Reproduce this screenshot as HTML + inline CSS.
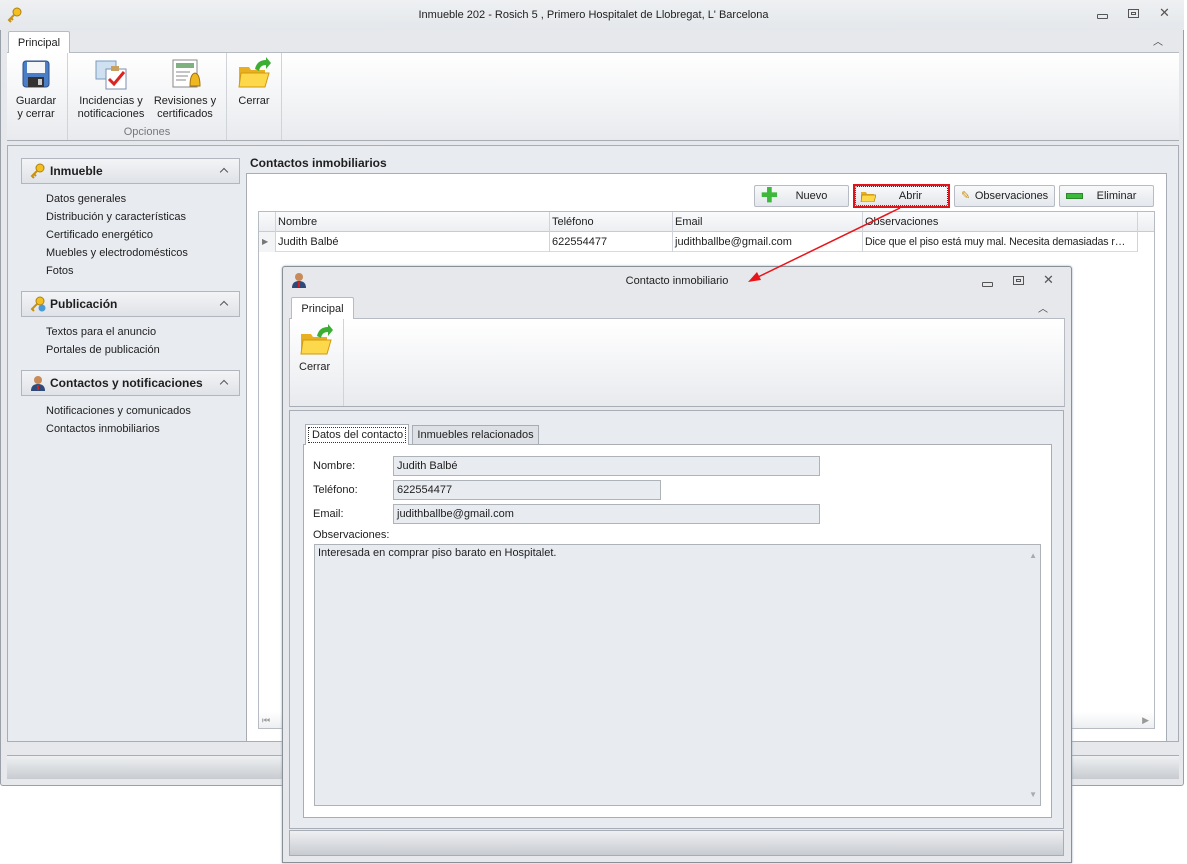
<!DOCTYPE html>
<html><head><meta charset="utf-8"><style>
*{box-sizing:border-box;margin:0;padding:0}
body{width:1187px;height:864px;background:#fff;font-family:"Liberation Sans",sans-serif;font-size:11px;color:#1e1e1e;position:relative;overflow:hidden}
.a{position:absolute}
.btn{position:absolute;height:22px;border:1px solid #b7bcc4;border-radius:2px;background:linear-gradient(#f8f9fa,#e4e7ec);text-align:center;line-height:20px}
.sh{position:absolute;left:21px;width:219px;height:26px;border:1px solid #b2b7bf;background:linear-gradient(#f3f4f6,#dfe2e7);font-weight:bold;font-size:12px;line-height:25px;padding-left:28px}
.sh:after{content:"";position:absolute;right:12px;top:10px;width:5px;height:5px;border-left:1.5px solid #555;border-top:1.5px solid #555;transform:rotate(45deg)}
.si{position:absolute;left:46px}
.cell{position:absolute;border-right:1px solid #d0d4da;padding-left:3px;line-height:20px;height:20px;white-space:nowrap;overflow:hidden}
.inp{position:absolute;height:20px;border:1px solid #aeb3ba;background:#e8ebf0;padding-left:3px;line-height:18px}
.lab{position:absolute;left:313px}
</style></head><body>
<div class="a" style="left:0;top:0;width:1184px;height:786px;border:1px solid #9aa0a8;border-top:none;background:#e6e8ec;border-radius:0 0 3px 3px"></div>
<div class="a" style="left:0;top:0;width:1184px;height:30px;background:linear-gradient(#eef0f2,#e4e7eb)"></div>
<svg class="a" style="left:7px;top:7px" width="16" height="16"><circle cx="10" cy="5" r="4" fill="#f3c020" stroke="#b08010"/><path d="M7 8 L2 13 L4 15 M4 11 L6 13" stroke="#c89010" stroke-width="2" fill="none"/></svg>
<div class="a" style="left:0;width:1187px;top:9px;text-align:center">Inmueble 202 - Rosich 5 , Primero Hospitalet de Llobregat, L' Barcelona</div>
<div class="a" style="left:1097px;top:14px;width:11px;height:5px;border:1px solid #555;border-radius:1px"></div>
<div class="a" style="left:1128px;top:9px;width:11px;height:9px;border:1px solid #555"><div style="margin:2px;height:3px;border:1px solid #555"></div></div>
<div class="a" style="left:1159px;top:5px;font-size:13px;color:#555">✕</div>
<div class="a" style="left:1153px;top:33px;font-size:10px;color:#444">︿</div>
<div class="a" style="left:8px;top:31px;width:62px;height:22px;background:#fff;border:1px solid #b7bcc4;border-bottom:none;border-radius:2px 2px 0 0;text-align:center;line-height:22px;z-index:2">Principal</div>
<div class="a" style="left:7px;top:52px;width:1172px;height:89px;background:linear-gradient(#fff,#f2f3f5 60%,#e8eaee);border-top:1px solid #b7bcc4;border-bottom:1px solid #a8adb5"></div>
<div class="a" style="left:67px;top:53px;width:1px;height:87px;background:#d0d3d8"></div>
<div class="a" style="left:226px;top:53px;width:1px;height:87px;background:#d0d3d8"></div>
<div class="a" style="left:281px;top:53px;width:1px;height:87px;background:#d0d3d8"></div>
<svg class="a" style="left:22px;top:60px" width="28" height="28"><rect x="1" y="1" width="26" height="26" rx="3" fill="#4a7fc8" stroke="#2a4f8a"/><rect x="5" y="2" width="18" height="11" fill="#f4f6f8"/><rect x="6" y="17" width="16" height="10" fill="#333"/><rect x="16" y="19" width="4" height="6" fill="#ccc"/></svg>
<svg class="a" style="left:94px;top:57px" width="36" height="34"><rect x="2" y="4" width="20" height="18" fill="#cfe0f0" stroke="#7b9cc0"/><rect x="12" y="12" width="20" height="20" fill="#fff" stroke="#7b8fb0"/><path d="M15 22 L20 27 L30 15" stroke="#d22" stroke-width="3" fill="none"/><rect x="17" y="9" width="8" height="5" fill="#c9a060"/></svg>
<svg class="a" style="left:170px;top:58px" width="34" height="32"><rect x="3" y="2" width="24" height="27" fill="#fff" stroke="#888"/><rect x="6" y="5" width="18" height="5" fill="#7fb080"/><path d="M6 14h14M6 18h12M6 22h10" stroke="#888"/><path d="M20 28 Q20 16 25 15 Q30 16 30 28 Z" fill="#f0b820" stroke="#a07010"/></svg>
<svg class="a" style="left:237px;top:57px" width="34" height="34"><path d="M2 10 L12 10 L14 13 L28 13 L28 30 L2 30 Z" fill="#e8b020"/><path d="M4 16 L32 16 L28 30 L2 30 Z" fill="#fcd84a" stroke="#d09a10"/><path d="M18 12 Q20 3 29 3 L29 0 L34 6 L29 12 L29 8 Q23 8 22 14" fill="#3cae34"/></svg>
<div class="a" style="left:8px;top:95px;width:56px;text-align:center;line-height:13px">Guardar<br>y cerrar</div>
<div class="a" style="left:75px;top:95px;width:72px;text-align:center;line-height:13px">Incidencias y<br>notificaciones</div>
<div class="a" style="left:150px;top:95px;width:70px;text-align:center;line-height:13px">Revisiones y<br>certificados</div>
<div class="a" style="left:232px;top:95px;width:44px;text-align:center">Cerrar</div>
<div class="a" style="left:68px;top:126px;width:158px;text-align:center;color:#777">Opciones</div>
<div class="a" style="left:7px;top:145px;width:1172px;height:597px;background:#e8ebf0;border:1px solid #a8adb5"></div>
<div class="sh" style="top:158px">Inmueble</div>
<div class="sh" style="top:291px">Publicación</div>
<div class="sh" style="top:370px">Contactos y notificaciones</div>
<svg class="a" style="left:30px;top:163px" width="16" height="16"><circle cx="10" cy="5" r="4" fill="#f3c020" stroke="#b08010"/><path d="M7 8 L2 13 L4 15 M4 11 L6 13" stroke="#c89010" stroke-width="2" fill="none"/></svg>
<svg class="a" style="left:30px;top:296px" width="16" height="16"><circle cx="10" cy="5" r="4" fill="#f3c020" stroke="#b08010"/><path d="M7 8 L2 13 L4 15" stroke="#c89010" stroke-width="2" fill="none"/><circle cx="12" cy="12" r="3.5" fill="#4a9ad8"/></svg>
<svg class="a" style="left:30px;top:375px" width="16" height="16"><circle cx="8" cy="5" r="4" fill="#c98a5a"/><path d="M1 16 Q1 9 8 9 Q15 9 15 16Z" fill="#2d4a7a"/><path d="M8 10 L8 15" stroke="#c22" stroke-width="2"/></svg>
<div class="si" style="top:193px">Datos generales</div>
<div class="si" style="top:211px">Distribución y características</div>
<div class="si" style="top:229px">Certificado energético</div>
<div class="si" style="top:247px">Muebles y electrodomésticos</div>
<div class="si" style="top:265px">Fotos</div>
<div class="si" style="top:326px">Textos para el anuncio</div>
<div class="si" style="top:344px">Portales de publicación</div>
<div class="si" style="top:405px">Notificaciones y comunicados</div>
<div class="si" style="top:423px">Contactos inmobiliarios</div>
<div class="a" style="left:250px;top:156px;font-weight:bold;font-size:12px">Contactos inmobiliarios</div>
<div class="a" style="left:246px;top:173px;width:921px;height:569px;background:#fff;border:1px solid #a8adb5"></div>
<div class="btn" style="left:754px;top:185px;width:95px;padding-left:20px"><span style="position:absolute;left:6px;top:1px;color:#3cb83c;font-size:20px;font-weight:bold;line-height:18px">✚</span>Nuevo</div>
<div class="a" style="left:853px;top:184px;width:97px;height:24px;border:2px solid #e0141a"></div>
<div class="btn" style="left:855px;top:186px;width:93px;height:20px;line-height:18px;border:1px dotted #333;padding-left:18px"><svg style="position:absolute;left:4px;top:3px" width="16" height="12"><path d="M1 2h5l1 2h7v8H1z" fill="#e8b020"/><path d="M2 5h14l-2 7H1z" fill="#fcd84a" stroke="#b08010" stroke-width=".7"/></svg>Abrir</div>
<div class="btn" style="left:954px;top:185px;width:101px;padding-left:14px">Observaciones<span style="position:absolute;left:6px;top:0;color:#c89010">✎</span></div>
<div class="btn" style="left:1059px;top:185px;width:95px;padding-left:20px"><span style="position:absolute;left:6px;top:7px;width:17px;height:6px;background:#3cb83c;border:1px solid #2a8a2a"></span>Eliminar</div>
<div class="a" style="left:258px;top:211px;width:897px;height:518px;border:1px solid #b7bcc4;background:#fff"></div>
<div class="a" style="left:259px;top:212px;width:895px;height:20px;background:linear-gradient(#fafbfc,#eceef1);border-bottom:1px solid #c8ccd2"></div>
<div class="cell" style="left:259px;top:212px;width:17px"></div>
<div class="cell" style="left:275px;top:212px;width:275px">Nombre</div>
<div class="cell" style="left:549px;top:212px;width:124px">Teléfono</div>
<div class="cell" style="left:672px;top:212px;width:191px">Email</div>
<div class="cell" style="left:862px;top:212px;width:276px">Observaciones</div>
<div class="a" style="left:259px;top:232px;width:879px;height:20px;border-bottom:1px solid #d8dbe0"></div>
<div class="cell" style="left:259px;top:232px;width:17px;background:#f3f4f6;color:#777;font-size:8px">▶</div>
<div class="cell" style="left:275px;top:232px;width:275px">Judith Balbé</div>
<div class="cell" style="left:549px;top:232px;width:124px">622554477</div>
<div class="cell" style="left:672px;top:232px;width:191px">judithballbe@gmail.com</div>
<div class="cell" style="left:862px;top:232px;width:276px;font-size:10.6px;letter-spacing:-0.1px">Dice que el piso está muy mal. Necesita demasiadas r…</div>
<div class="a" style="left:259px;top:712px;width:895px;height:16px;background:linear-gradient(#fff,#eceef1);color:#999;font-size:9px;padding-left:3px;line-height:16px">⏮<span style="position:absolute;right:5px">▶</span></div>
<div class="a" style="left:7px;top:755px;width:1172px;height:24px;background:linear-gradient(#eef0f2,#c8cbd0);border-top:1px solid #a8adb5"></div>
<div class="a" style="left:282px;top:266px;width:790px;height:597px;border:1px solid #8a9098;background:#e6e8ec;border-radius:3px 3px 0 0;box-shadow:0 0 2px #9ab"></div>
<svg class="a" style="left:291px;top:272px" width="16" height="16"><circle cx="8" cy="5" r="4" fill="#c98a5a"/><path d="M1 16 Q1 9 8 9 Q15 9 15 16Z" fill="#2d4a7a"/><path d="M8 10 L8 15" stroke="#c22" stroke-width="2"/></svg>
<div class="a" style="left:282px;width:790px;top:275px;text-align:center">Contacto inmobiliario</div>
<div class="a" style="left:982px;top:282px;width:11px;height:5px;border:1px solid #555;border-radius:1px"></div>
<div class="a" style="left:1013px;top:276px;width:11px;height:9px;border:1px solid #555"><div style="margin:2px;height:3px;border:1px solid #555"></div></div>
<div class="a" style="left:1043px;top:272px;font-size:13px;color:#555">✕</div>
<div class="a" style="left:1038px;top:300px;font-size:10px;color:#444">︿</div>
<div class="a" style="left:291px;top:297px;width:63px;height:22px;background:#fff;border:1px solid #b7bcc4;border-bottom:none;border-radius:2px 2px 0 0;text-align:center;line-height:22px;z-index:2">Principal</div>
<div class="a" style="left:289px;top:318px;width:776px;height:89px;background:linear-gradient(#fff,#f2f3f5 60%,#e8eaee);border:1px solid #b7bcc4;border-bottom-color:#a8adb5"></div>
<div class="a" style="left:343px;top:319px;width:1px;height:87px;background:#d0d3d8"></div>
<svg class="a" style="left:299px;top:324px" width="34" height="34"><path d="M2 10 L12 10 L14 13 L28 13 L28 30 L2 30 Z" fill="#e8b020"/><path d="M4 16 L32 16 L28 30 L2 30 Z" fill="#fcd84a" stroke="#d09a10"/><path d="M18 12 Q20 3 29 3 L29 0 L34 6 L29 12 L29 8 Q23 8 22 14" fill="#3cae34"/></svg>
<div class="a" style="left:299px;top:361px">Cerrar</div>
<div class="a" style="left:289px;top:410px;width:775px;height:419px;background:#e8ebf0;border:1px solid #a8adb5"></div>
<div class="a" style="left:305px;top:424px;width:104px;height:21px;background:#fff;border:1px solid #a8adb5;border-bottom:none;z-index:2;padding:2px"><div style="border:1px dotted #333;line-height:14px;padding-left:3px">Datos del contacto</div></div>
<div class="a" style="left:412px;top:425px;width:127px;height:20px;background:#dde0e5;border:1px solid #a8adb5;text-align:center;line-height:19px">Inmuebles relacionados</div>
<div class="a" style="left:303px;top:444px;width:749px;height:374px;background:#fff;border:1px solid #a8adb5"></div>
<div class="lab" style="top:460px">Nombre:</div>
<div class="lab" style="top:484px">Teléfono:</div>
<div class="lab" style="top:508px">Email:</div>
<div class="lab" style="top:529px">Observaciones:</div>
<div class="inp" style="left:393px;top:456px;width:427px">Judith Balbé</div>
<div class="inp" style="left:393px;top:480px;width:268px">622554477</div>
<div class="inp" style="left:393px;top:504px;width:427px">judithballbe@gmail.com</div>
<div class="inp" style="left:314px;top:544px;width:727px;height:262px;line-height:15px;padding-top:1px">Interesada en comprar piso barato en Hospitalet.<span style="position:absolute;right:3px;top:3px;color:#aaa;font-size:8px">▲</span><span style="position:absolute;right:3px;bottom:3px;color:#aaa;font-size:8px">▼</span></div>
<div class="a" style="left:289px;top:830px;width:775px;height:26px;background:linear-gradient(#eef0f2,#c8cbd0);border:1px solid #a8adb5"></div>
<svg class="a" style="left:0;top:0" width="1187" height="864"><line x1="900" y1="208" x2="756" y2="278" stroke="#e8141a" stroke-width="1.5"/><path d="M748 282 L757 272 L761 280 Z" fill="#e8141a"/></svg>
</body></html>
